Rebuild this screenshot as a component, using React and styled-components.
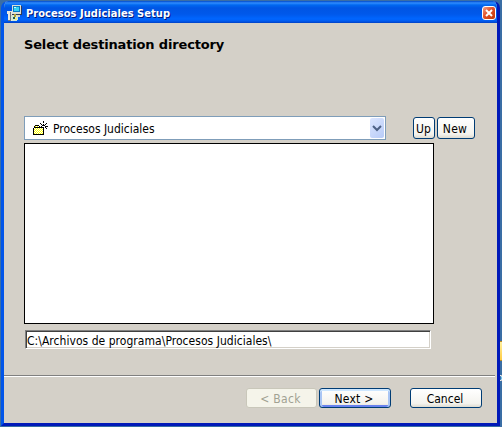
import React from "react";
import styled, { createGlobalStyle } from "styled-components";

const Global = createGlobalStyle`
  * { box-sizing: border-box; }
  body { margin: 0; overflow: hidden; background: #3a6ea5; }
`;
const Desktop = styled.main`
  position: relative;
  width: 502px;
  height: 427px;
  padding: 1px 0 0 1px;
  overflow: hidden;
  background: #3a6ea5;
  font-family: "DejaVu Sans Condensed", "DejaVu Sans", sans-serif;
  font-stretch: condensed;
  color: #000;
`;
const DesktopIcon = styled.div`
  position: absolute;
  left: 499px;
  top: 341px;
  width: 5px;
  height: 20px;
  border: 1px solid #b88a2c;
  background: linear-gradient(#fff0a0, #ffcc42);
`;
const DesktopLabel = styled.span`
  position: absolute;
  left: 497px;
  top: 371px;
  font-size: 11px;
  line-height: 13px;
  color: #fff;
`;
const Window = styled.section`
  position: relative;
  width: 499px;
  height: 425px;
  display: flex;
  flex-direction: column;
  border: 3px solid;
  border-width: 0 3px 3px 3px;
  border-color: #0019b8 #0019b8 #0019b8 #0055ea;
  border-radius: 7px 7px 0 0;
  background: #d4d0c8;
  overflow: hidden;
`;
const TitleBar = styled.header`
  flex: none;
  height: 22px;
  margin: 0 -3px;
  padding: 2px 4px 0 5px;
  display: flex;
  align-items: center;
  background: linear-gradient(#0049c8 0, #2f8cff 2px, #0068f0 4px, #0055e4 7px, #0058ea 13px, #0066ff 18px, #005bf0 20px, #0040c4 22px);
`;
const Title = styled.h1`
  flex: 1;
  margin: 1px 0 0 4px;
  font: bold 11px/16px "DejaVu Sans Condensed", "DejaVu Sans", sans-serif;
  font-stretch: condensed;
  letter-spacing: 0.05px;
  color: #fff;
  text-shadow: 1px 1px #00187c;
  white-space: nowrap;
`;
const Close = styled.button`
  width: 14px;
  height: 14px;
  padding: 0;
  border: 1px solid #fff;
  border-radius: 3px;
  background: linear-gradient(135deg, #f0a088, #e05028 45%, #c03808);
  display: grid;
  place-items: center;
`;
const Body = styled.div`
  flex: 1;
  padding: 0 0 0 20px;
`;
const Heading = styled.h2`
  margin: 0;
  padding-top: 14px;
  height: 93px;
  font: bold 13px/16px "DejaVu Sans", sans-serif;
  letter-spacing: -0.16px;
  white-space: nowrap;
`;
const Row = styled.div`
  display: flex;
  align-items: center;
  height: 24px;
`;
const Select = styled.div`
  width: 362px;
  height: 24px;
  display: flex;
  align-items: center;
  padding: 0 1px 0 8px;
  border: 1px solid #7f9db9;
  background: #fff;
`;
const Text = styled.span`
  font-size: 12px;
  line-height: 16px;
  letter-spacing: ${(p) => p.$spacing || "0"};
  white-space: pre;
`;
const SelectText = styled(Text)`
  flex: 1;
  margin: 1px 0 0 5px;
`;
const Arrow = styled.span`
  width: 14px;
  height: 20px;
  display: grid;
  place-items: center;
  border-radius: 2px;
  background: linear-gradient(135deg, #dce6ff, #b8cbf8);
`;
const Button = styled.button`
  width: ${(p) => p.$w}px;
  height: ${(p) => p.$h || 20}px;
  margin-left: ${(p) => p.$gap}px;
  padding: ${(p) => p.$pad || "1px 2px 0 0"};
  display: flex;
  align-items: center;
  justify-content: center;
  border: 1px solid ${(p) => (p.disabled ? "#c9c7ba" : "#003c74")};
  border-radius: 3px;
  background: ${(p) => (p.disabled ? "#f5f4ea" : "linear-gradient(#fff, #f4f3ee 80%, #dedbd0)")};
  box-shadow: ${(p) => (p.$focus ? "inset 0 2px #cee7ff, inset 2px 0 #a9c5f4, inset -2px 0 #a9c5f4, inset 0 -2px #6982ee" : "none")};
  color: ${(p) => (p.disabled ? "#a1a192" : "#000")};
  font: inherit;
`;
const Listing = styled.div`
  width: 410px;
  height: 181px;
  margin-top: 3px;
  border: 1px solid #000;
  background: #fff;
`;
const PathField = styled.div`
  width: 406px;
  height: 19px;
  margin: 6px 0 0 1px;
  padding: 2px 0 0 1px;
  border: 1px solid;
  border-color: #808080 #fff #fff #808080;
  box-shadow: inset 1px 1px #404040, inset -1px -1px #d4d0c8;
  background: #fff;
  display: flex;
  align-items: center;
`;
const Footer = styled.footer`
  width: 491px;
  height: 48px;
  flex: none;
  display: flex;
  align-items: flex-start;
  justify-content: flex-end;
  padding: 12px 13px 0 0;
  border-top: 1px solid #808080;
  box-shadow: inset 0 1px #fff;
`;

const SetupIcon = () => (
  <svg width="16" height="17" viewBox="0 0 16 17" shapeRendering="crispEdges">
    <path d="M1 6h5v10H2V9H1z" fill="#e8e8df" />
    <path d="M4 7h1v9H2v-1h2z" fill="#777" />
    <path d="M6 0h9v9H6z" fill="#dfdfd5" />
    <path d="M7 1h7v6H7z" fill="#087cc5" />
    <path d="M8 2h5v4H8z" fill="#35d3f3" />
    <path d="M8 2h2v1H8z" fill="#c8ffff" />
    <path d="M15 1h1v9h-1zM6 9h9v1H6z" fill="#333c55" />
    <path d="M5 10h9v2H5z" fill="#d7d3c5" />
    <path d="M6 10h5v1h1v4h-1v1H6v-1H5v-4h1z" fill="#d4ead7" />
    <path d="M8 9h2v3H8z" fill="#b0a234" />
    <path d="M7 12h2v2H7z" fill="#245e52" />
    <path d="M9 13h2v2H9z" fill="#f5f07a" />
  </svg>
);
const FolderIcon = () => (
  <svg width="15" height="15" viewBox="0 0 15 15" shapeRendering="crispEdges">
    <defs>
      <pattern id="dither" width="2" height="2" patternUnits="userSpaceOnUse">
        <rect width="2" height="2" fill="#ff0" />
        <path d="M0 0h1v1H0zM1 1h1v1H1z" fill="#fff" />
      </pattern>
    </defs>
    <path d="M1 6h9v7H1zM2 5h5v1H2z" fill="url(#dither)" />
    <path d="M1 6h10v8H0V7h1zM1 7v6h9V7z" fill="#000" fillRule="evenodd" />
    <path d="M1 5h1v1H1zM2 4h4v1H2zM6 5h1v1H6z" />
    <path d="M10 0h1v2h-1zM7 2h1v1H7zM8 3h1v1H8zM10 3h1v2h-1zM12 3h1v1h-1zM13 2h1v1h-1zM9 4h1v1H9zM11 4h1v1h-1zM8 5h1v1H8zM12 5h3v1h-3zM12 6h1v1h-1zM13 7h1v1h-1z" />
  </svg>
);

export default function App() {
  return (
    <>
      <Global />
      <Desktop>
        <DesktopIcon />
        <DesktopLabel>o</DesktopLabel>
        <Window>
          <TitleBar>
            <SetupIcon />
            <Title>Procesos Judiciales Setup</Title>
            <Close aria-label="Close">
              <svg width="8" height="8" viewBox="0 0 8 8">
                <path d="M1 1l6 6M7 1L1 7" stroke="#fff" strokeWidth="2" />
              </svg>
            </Close>
          </TitleBar>
          <Body>
            <Heading>Select destination directory</Heading>
            <Row>
              <Select>
                <FolderIcon />
                <SelectText>Procesos Judiciales</SelectText>
                <Arrow>
                  <svg width="10" height="7" viewBox="0 0 10 7">
                    <path d="M1 1l4 4 4-4" fill="none" stroke="#4d6185" strokeWidth="2" />
                  </svg>
                </Arrow>
              </Select>
              <Button $w={22} $h={22} $gap={27} $pad="1px 1px 0 0"><Text>Up</Text></Button>
              <Button $w={38} $h={22} $gap={2}><Text $spacing="0.3px">New</Text></Button>
            </Row>
            <Listing />
            <PathField><Text $spacing="0.04px">{"C:\\Archivos de programa\\Procesos Judiciales\\"}</Text></PathField>
          </Body>
          <Footer>
            <Button $w={71} $gap={0} disabled><Text $spacing="0.3px">&lt; Back</Text></Button>
            <Button $w={72} $gap={2} $focus><Text $spacing="0.2px">Next &gt;</Text></Button>
            <Button $w={72} $gap={19}><Text>Cancel</Text></Button>
          </Footer>
        </Window>
      </Desktop>
    </>
  );
}
